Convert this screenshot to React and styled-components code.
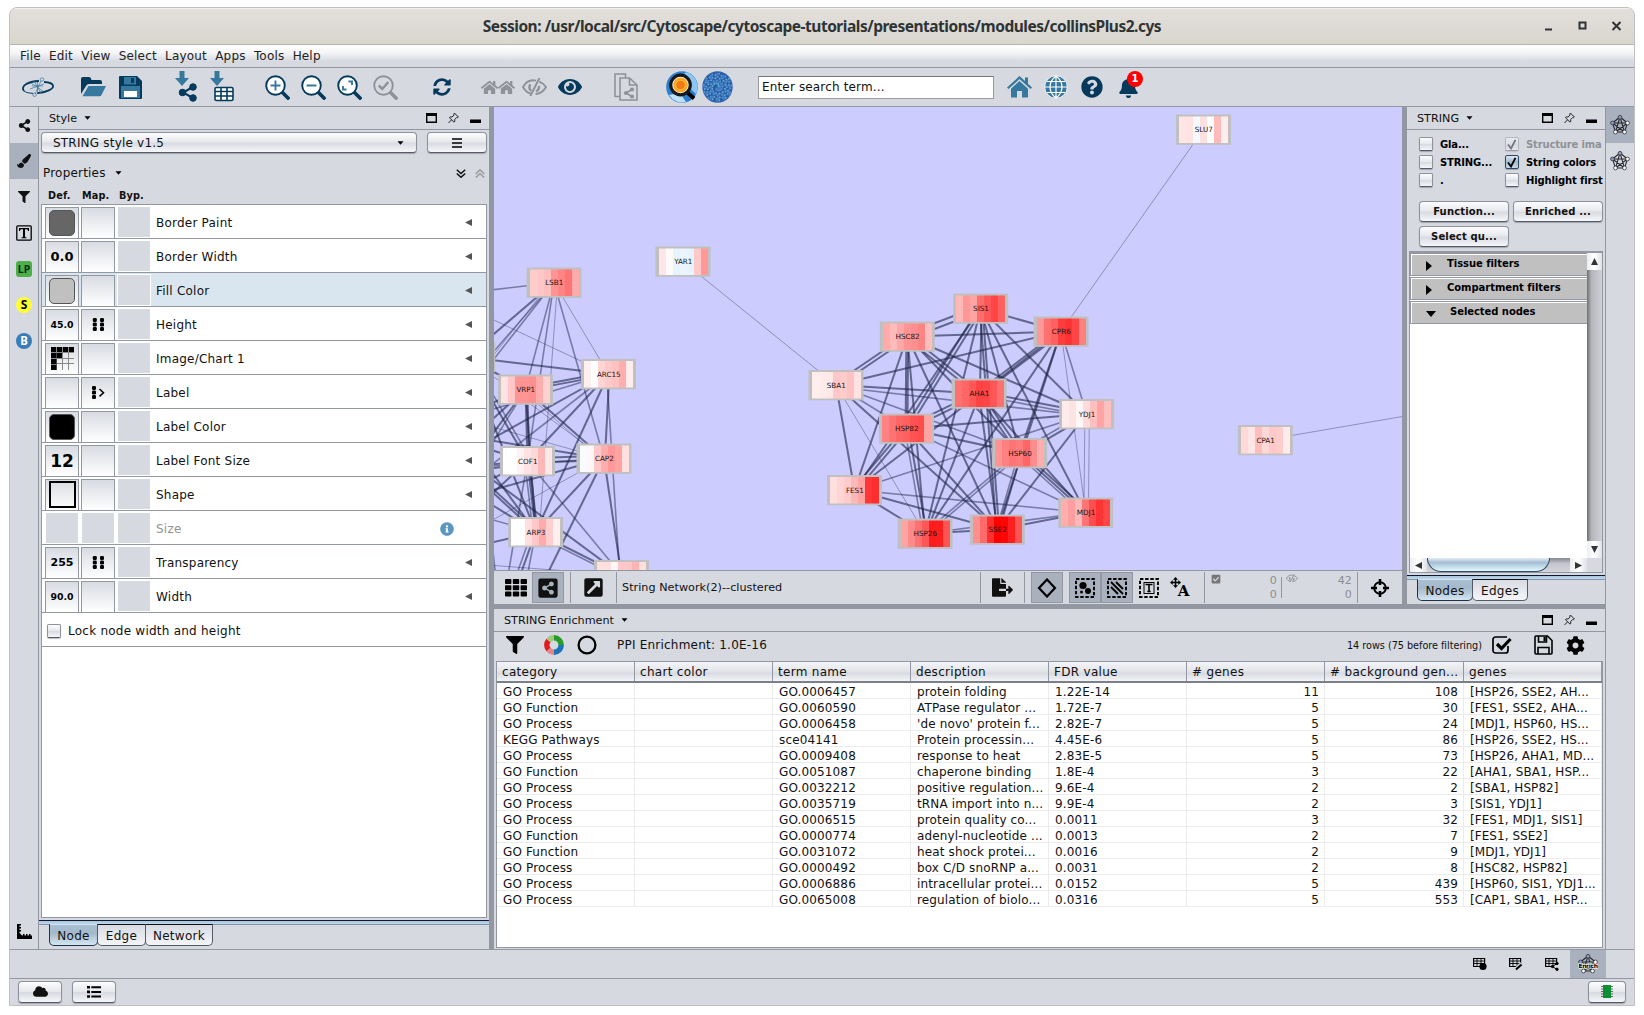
import React from "react";
import styled, { createGlobalStyle, css } from "styled-components";
import {
  FaShareAlt, FaPaintBrush, FaFilter, FaEye,
  FaQuestionCircle, FaBell, FaCloud, FaCog, FaInfoCircle,
  FaShareAltSquare, FaCheckSquare, FaFileExport, FaExternalLinkSquareAlt,
  FaSyncAlt, FaHome,
} from "react-icons/fa";

const LINE = "#9297a1";
const BG = "#d6d9e0";
const SEL = "#a9b0be";
const NAVY = "#053a5c";
const BLUE = "#37789f";

const Global = createGlobalStyle`
  *{box-sizing:border-box}
  body{margin:0;background:#fff;overflow:hidden}
  body,input{font-family:"DejaVu Sans",sans-serif;font-size:12px;letter-spacing:.15px;color:#111}
  svg{display:block;flex:none}
`;

const Page = styled.div`width:1644px;height:1015px;padding:7px 9px 9px;`;
const Window = styled.div`
  width:1626px;height:999px;border:1px solid #c0c0c2;border-radius:8px 8px 0 0;
  overflow:hidden;display:flex;flex-direction:column;background:${BG};
`;
const TitleBar = styled.div`
  height:37px;flex:none;display:flex;align-items:center;border-bottom:1px solid #b7b4aa;
  background:linear-gradient(#e3e0dc,#d9d6cf);padding-right:10px;box-shadow:inset 0 1px #f3f1ee;
`;
const Title = styled.div`
  flex:1;text-align:center;font:700 15.5px "Noto Sans","Open Sans",sans-serif;letter-spacing:-.48px;
  color:#2e3436;padding-left:93px;
`;
const WinButtons = styled.div`display:flex;gap:19px;`;
const MenuBar = styled.div`
  height:23px;flex:none;border-bottom:1px solid ${LINE};display:flex;gap:8.3px;align-items:center;
  padding:0 10px;background:linear-gradient(#fff,#f4f5f7 35%,${BG} 75%);color:#222;letter-spacing:.17px;
`;
const ToolBar = styled.div`
  height:39px;flex:none;border-bottom:1px solid ${LINE};display:flex;align-items:center;padding-left:12px;
`;
const Tool = styled.div`
  width:${p => p.$w}px;height:34px;margin-right:${p => p.$gap || 0}px;flex:none;position:relative;
  display:flex;align-items:center;justify-content:center;color:${p => p.$c || NAVY};
`;
const SearchBox = styled.input`
  width:236px;height:23px;border:1px solid #9b9b9b;border-top-color:#777;background:#fff;padding:0 3px;
  margin-right:13px;outline:0;&::placeholder{color:#111;opacity:1}
`;
const Badge = styled.span`
  position:absolute;left:10px;top:1px;width:16px;height:16px;border-radius:8px;background:#f00;color:#fff;
  font:700 10px/16px "DejaVu Sans",sans-serif;text-align:center;
`;
const Main = styled.div`height:842px;flex:none;display:flex;`;
const Strip = styled.div`
  width:${p => p.$w}px;flex:none;display:flex;flex-direction:column;
  ${p => p.$side === "left" ? css`border-right:1px solid ${LINE};` : css`border-left:1px solid ${LINE};`}
`;
const StripTab = styled.div`
  height:36px;display:flex;align-items:center;justify-content:center;background:${p => p.$on ? SEL : "transparent"};
`;
const Grow = styled.div`flex:1;`;
const TagChip = styled.div`
  width:16px;height:16px;border-radius:${p => p.$round ? "8px" : "3px"};background:${p => p.$bg};color:${p => p.$c};
  font:700 ${p => p.$fs || 10.5}px/16px "Noto Sans",sans-serif;text-align:center;letter-spacing:0;
`;
const StylePanel = styled.div`width:450px;flex:none;display:flex;flex-direction:column;`;
const PanelHead = styled.div`
  height:23px;flex:none;border-bottom:1px solid ${LINE};display:flex;align-items:center;
  padding:0 8px 0 10px;font-size:11.2px;letter-spacing:0;
`;
const HeadIcons = styled.div`margin-left:auto;display:flex;gap:11px;align-items:center;`;
const metal = css`
  border:1px solid #8d929c;border-bottom-color:#555a63;border-radius:4px;
  background:linear-gradient(#fdfdfe,#e6e8ec 48%,#d7dae1 52%,#f6f7fa);
  box-shadow:0 1px 1px rgba(60,65,80,.35);
`;
const Button = styled.div`
  ${metal} width:${p => p.$w}px;height:${p => p.$h || 21}px;flex:none;display:flex;align-items:center;justify-content:center;
  ${p => p.$bold && css`font:700 10px "DejaVu Sans",sans-serif;`}
`;
const Combo = styled.div`${metal} width:376px;height:21px;display:flex;align-items:center;justify-content:space-between;padding:0 12px 0 11px;letter-spacing:.2px;`;
const ComboRow = styled.div`display:flex;justify-content:space-between;padding:2px 2px 0;height:24px;`;
const PropsHead = styled.div`height:36px;flex:none;display:flex;align-items:center;padding:2px 4px 0 4px;gap:9px;letter-spacing:.2px;`;
const ColHead = styled.div`
  height:14px;flex:none;display:grid;grid-template-columns:34px 37px 40px;padding-left:9px;
  font:700 9.7px/12px "DejaVu Sans",sans-serif;
`;
const PropList = styled.div`flex:none;margin:0 2px 2px;height:714px;border:1px solid ${LINE};background:#fff;`;
const PropRow = styled.div`
  height:34px;border-bottom:1px solid ${LINE};display:flex;align-items:flex-end;padding:0 14px 0 3px;
  background:${p => p.$on ? "#dae6ef" : "#fff"};color:${p => p.$dim ? "#949494" : "#111"};
`;
const Cell = styled.div`
  display:flex;align-items:center;justify-content:center;margin-right:2px;width:34px;height:31px;
  ${p => p.$empty ? css`width:32px;height:30px;margin:0 3px 1px 1px;background:${BG};outline:${p.$ring ? "1px solid #fff" : "0"};` : css`
    border:1px solid ${LINE};border-bottom:0;margin-bottom:0;padding:0 0 1px;
    background:linear-gradient(#d8dbe2,#fff);`}
  font:700 ${p => p.$fs || 12}px "DejaVu Sans",sans-serif;color:#000;letter-spacing:0;
`;
const Swatch = styled.div`width:26px;height:26px;border-radius:5px;background:${p => p.$c};border:1px solid #555;`;
const Square = styled.div`width:27px;height:27px;border:2px solid #000;margin-left:1px;`;
const PropName = styled.div`flex:1;height:33px;line-height:37px;padding-left:3px;letter-spacing:.22px;`;
const RowEnd = styled.div`height:31px;display:flex;align-items:center;margin-right:${p => p.$m || 0}px;`;
const LockRow = styled.div`height:34px;border-bottom:1px solid ${LINE};display:flex;align-items:center;padding:2px 0 0 5px;gap:7px;letter-spacing:.24px;`;
const Check = styled.div`
  ${metal} width:14px;height:14px;border-radius:2px;flex:none;display:flex;align-items:center;justify-content:center;
  ${p => p.$on && css`background:linear-gradient(#dfe9f2,#9fb9cd 50%,#c5dbea);border-color:#2d4861;`}
  ${p => p.$dim && css`opacity:.45;`}
`;
const TabEdge = styled.div`height:5px;flex:none;border-top:1px solid #101830;border-bottom:1px solid #7f97ab;background:linear-gradient(#a9c3da,#c0d9ec);`;
const Tabs = styled.div`display:flex;padding-left:10px;margin-top:-1px;`;
const Tab = styled.div`
  width:${p => p.$w}px;height:22px;line-height:22px;text-align:center;border:1px solid ${p => p.$on ? "#1c3347" : "#555b66"};border-top-color:${p => p.$on ? "transparent" : "#101018"};
  border-radius:0 0 5px 5px;margin-right:-1px;letter-spacing:.3px;
  background:${p => p.$on ? "linear-gradient(#a9c0d3,#a3b8ca 40%,#d3e6f2)" : "linear-gradient(#d8dbe2,#f4f5f8)"};
`;
const Divider = styled.div`
  flex:none;background:${LINE};${p => p.$h ? css`height:5px;` : css`width:5px;`}
`;
const Work = styled.div`width:1111px;flex:none;display:flex;flex-direction:column;`;
const Upper = styled.div`height:497px;flex:none;display:flex;`;
const Network = styled.div`width:908px;flex:none;display:flex;flex-direction:column;`;
const NetBar = styled.div`
  height:34px;flex:none;border-top:1px solid ${LINE};display:flex;align-items:center;
`;
const NetButton = styled.div`
  width:${p => p.$w || 32}px;height:31px;flex:none;display:flex;align-items:center;justify-content:center;
  margin-right:${p => p.$gap || 0}px;padding-left:${p => p.$pl || 0}px;
  ${p => p.$on && css`background:${SEL};border:1px solid ${LINE};`}
`;
const Sep = styled.div`width:1px;height:${p => p.$h || 31}px;background:${LINE};flex:none;`;
const NetName = styled.div`font-size:11.2px;padding-left:5px;flex:1;letter-spacing:.03px;`;
const Counts = styled.div`
  width:${p => p.$w}px;display:grid;grid-template-columns:14px 1fr;color:#8b8e94;font:11px/14px "DejaVu Sans",sans-serif;text-align:right;
`;
const StringPanel = styled.div`width:198px;flex:none;display:flex;flex-direction:column;overflow:hidden;`;
const Options = styled.div`
  display:grid;grid-template-columns:86px 1fr;grid-auto-rows:18px;padding:5px 0 0 12px;height:67px;flex:none;align-items:center;
`;
const Option = styled.div`
  display:flex;gap:7px;align-items:center;white-space:nowrap;font:700 10px "DejaVu Sans",sans-serif;letter-spacing:-.15px;
  color:${p => p.$dim ? "#8f9297" : "#000"};
`;
const ButtonGrid = styled.div`
  display:grid;grid-template-columns:90px 90px;grid-auto-rows:21px;align-content:start;gap:4px;padding:4px 0 0 12px;flex:none;height:54px;
`;
const ScrollPane = styled.div`
  height:322px;flex:none;margin:0 2px 2px;border:2px solid ${LINE};border-width:2px 1px 1px 1px;
  display:grid;grid-template-columns:1fr 15px;grid-template-rows:1fr 14px;
`;
const Filters = styled.div`background:#fff;overflow:hidden;`;
const FilterRow = styled.div`
  height:23px;margin-bottom:1px;border:1px solid ${LINE};border-right:0;box-shadow:inset 1px 1px #fff;background:#c0c0c0;
  display:flex;align-items:center;padding-left:15px;font:700 10px "DejaVu Sans",sans-serif;letter-spacing:-.05px;color:#000;gap:${p => p.$gap}px;
`;
const FilterName = styled.span`padding-bottom:2px;`;
const FilterMark = styled.svg`margin-top:2px;`;
const VScroll = styled.div`background:linear-gradient(90deg,#6e7074,#b4b6bb 30%,#cfd1d6);display:flex;flex-direction:column;justify-content:space-between;`;
const HScroll = styled.div`background:linear-gradient(#85888f,#c4c6cb 40%,#d3d5da);display:flex;`;
const Arrow = styled.div`
  background:linear-gradient(90deg,#eceef2,#fff 50%,#dfe2e8);display:flex;align-items:center;justify-content:center;
  ${p => p.$v ? css`height:17px;` : css`width:17px;`}
`;
const Thumb = styled.div`
  width:123px;height:14px;border:1px solid #2c4a63;border-top:0;border-radius:0 0 14px 14px;
  background:linear-gradient(#e4eef6,#a5bed3 35%,#bcd5e6 60%,#e6f8ff);
`;
const Enrich = styled.div`flex:1;display:flex;flex-direction:column;`;
const EnrichBar = styled.div`height:29px;flex:none;display:flex;align-items:center;padding:0 20px 3px 12px;`;
const Ppi = styled.span`letter-spacing:.22px;padding-left:1px;`;
const RowsInfo = styled.div`font-size:9.7px;letter-spacing:-.03px;margin:0 10px 0 auto;`;
const Table = styled.div`height:287px;flex:none;margin:0 2px;border:1px solid ${LINE};background:#fff;`;
const grid = css`display:grid;grid-template-columns:repeat(6,138px) 139px 1fr;`;
const THead = styled.div`
  ${grid} height:21px;border-bottom:2px solid #7b7f89;background:linear-gradient(#f4f5f8,#e4e6ea 45%,#d8dbe1 60%,#f3f4f7);
`;
const Th = styled.div`height:19px;line-height:21px;padding:0 5px;border-right:1px solid ${LINE};white-space:nowrap;letter-spacing:.3px;`;
const TRow = styled.div`${grid} height:16px;border-bottom:1px solid #ececec;`;
const Td = styled.div`
  line-height:18px;height:16px;padding:0 5px 0 6px;border-right:1px solid #ececec;white-space:nowrap;text-align:${p => p.$r ? "right" : "left"};letter-spacing:.14px;
  &:last-child{letter-spacing:.05px;padding-right:0;}
`;
const StatusBar = styled.div`
  height:30px;flex:none;border-top:1px solid ${LINE};border-bottom:1px solid ${LINE};display:flex;justify-content:flex-end;padding-right:28px;
`;
const StatusTab = styled.div`width:36px;display:flex;align-items:center;justify-content:center;background:${p => p.$on ? SEL : "transparent"};`;
const Footer = styled.div`flex:1;display:flex;align-items:center;padding:0 8px 1px 8px;gap:10px;`;

const CaretMark = styled.svg`margin-left:7px;`;
const Caret = () => <CaretMark width="7" height="4"><path d="M0.5 .3h6l-3 3.4z" fill="#000" /></CaretMark>;
const PanelIcons = () => (
  <HeadIcons>
    <svg width="11" height="10"><path d="M.7 0h9.6v9.3H.7z" fill="none" stroke="#000" strokeWidth="1.4" /><path d="M0 0h11v3H0z" /></svg>
    <svg width="11" height="12" viewBox="0 0 11 12" fill="none" stroke="#222" strokeWidth="1"><path d="M6.4 1l4 4-1 .7-.7-.2-2 2 .1 2L6 10.2 1.400 5.600l.7-.7 2 .1 2-2-.3-.8zM3.500 7.900L.5 11" /></svg>
    <svg width="11" height="10"><path d="M0 6.500h11V10H0z" /></svg>
  </HeadIcons>
);
const Tri = ({ d = "l", s = 7, c = "#555" }) => (
  <svg width={s} height={s} viewBox="0 0 8 8"><path fill={c} d={{ l: "M8 0v8L0 4z", r: "M0 0v8l8-4z", u: "M0 8h8L4 0z", d: "M0 0h8L4 8z" }[d]} /></svg>
);
const Tick = () => <svg width="10" height="11" viewBox="0 0 10 11"><path d="M1 5.500l3 4L8.500.8" fill="none" stroke="#000" strokeWidth="1.800" /></svg>;
const Dots = ({ arrow }) => (
  <svg width="13" height="14" viewBox="0 0 13 14">
    {[0, 4.5, 9].map(y => <g key={y}><rect x={arrow ? 0 : .8} y={y} width="4" height="4" rx="1.200" />{!arrow && <rect x="8" y={y} width="4" height="4" rx="1.200" />}</g>)}
    {arrow && <path d="M7.500 3l4 3.700-4 3.700" fill="none" stroke="#000" strokeWidth="1.500" />}
  </svg>
);
const ChartGrid = () => (
  <svg width="23" height="23" viewBox="0 0 23 23">
    <path d="M5.500 0v23M11.500 0v23M17.500 0v23M0 5.500h23M0 11.500h23M0 16.500h23" stroke="#888" />
    <path d="M0 0h5v5H0zM6 0h5v5H6zM12 0h5v5h-5zM18 0h5v5h-5zM0 6h5.500v5H0zM6 6h5v5H6zM0 12h5.500v5H0zM0 17.500h5.500V23H0z" />
  </svg>
);
const Chevrons = ({ up, c }) => (
  <svg width="10" height="9" viewBox="0 0 10 9" fill="none" stroke={c} strokeWidth="1.500"><path d={up ? "M.8 4.800L5 .8l4.200 4M.8 8.500l4.200-4 4.200 4" : "M.8.8L5 4.600 9.200.8M.8 4.500L5 8.300l4.200-3.800"} /></svg>
);
const StarNet = ({ enrich }) => (
  <svg width="20" height="20" viewBox="0 0 20 20">
    <path d="M10 2L2.500 8l3 9h9l3-9zM10 2L5.500 17 17.500 8h-15l12 9z" fill="none" stroke="#24262b" strokeWidth="1.050" />
    {[[10, 2.300, "#8e9bd4"], [2.500, 8, "#8e9bd4"], [17.500, 8, "#fff"], [5.500, 17, "#fff"], [14.500, 17, "#fff"]].map(([x, y, f], i) => <circle key={i} cx={x} cy={y} r="1.900" fill={f} stroke="#333" strokeWidth=".8" />)}
    {enrich && <text x="10" y="13.800" textAnchor="middle" fontSize="6" fontWeight="700" letterSpacing="-.35" stroke="#fff" strokeWidth="1.200" paintOrder="stroke">Enrich</text>}
  </svg>
);
const Logo = () => (
  <svg width="32" height="20" viewBox="0 0 32 20" fill="none" stroke={NAVY}>
    <path d="M2 14C-2 9 6 4.500 17 4M15 16.200C24 15.500 32 12 31 8.500 30.500 6.500 27 5.300 22 5" strokeWidth="1.800" />
    <path d="M2 14c2 1.500 5 2.200 9 2.300" strokeWidth="1" />
    <g stroke={BLUE} strokeWidth=".7"><path d="M9 6l12 8M8 12l14-5M12 4l7 12M15.500 5v11M19 4l-6 13M10 9h11" /><circle cx="20" cy="2.500" r="1.700" /><circle cx="12.500" cy="17.800" r="1.700" /></g>
  </svg>
);
const Mag = ({ kind, c = NAVY, c2 = BLUE }) => (
  <svg width="25" height="25" viewBox="0 0 25 25">
    <path d="M16.500 16.500l6.500 6.500" stroke={c} strokeWidth="3.600" strokeLinecap="square" />
    <circle cx="10.500" cy="10.500" r="9.300" fill={kind === "ok" ? BG : "#fff"} stroke={c} strokeWidth="1.900" />
    <path fill="none" stroke={c2} strokeWidth={kind === "ok" ? 2.500 : 1.900} d={{ plus: "M5.500 10.500h10M10.500 5.500v10", minus: "M5.500 10.500h10", fit: "M11.500 6.500h3.500v3.500M9.500 14.500H6v-3.500", ok: "M5.800 10.500l3.500 3.500 6-7" }[kind]} />
  </svg>
);
const HiddenEye = ({ w = 25 }) => (
  <svg width={w} height={w * .72} viewBox="0 0 25 18" fill="none" stroke="currentColor">
    <path d="M14 2.600C8 1.200 3.500 4.500 1 9c1.800 3.300 4.500 5.600 7.500 6.500M17.300 3.600C20.300 4.800 22.400 6.800 24 9c-2.600 4.500-6.500 6.900-10.500 7" strokeWidth="1.900" />
    <path d="M8.300 6.300c-1.500 2.500-.8 5 1 6.500M17 8c.3 2.500-1 4.500-3 5.500" strokeWidth="2.400" /><path d="M17.500 0L8.300 18" strokeWidth="2" />
  </svg>
);
const Import = ({ table }) => (
  <svg width="24" height="32" viewBox="0 0 24 32">
    <path d="M4.500 0h5v7H14l-7 8-7-8h4.500z" fill={BLUE} />
    {table ? <g><rect x="5" y="16.500" width="18" height="13" rx="1.500" fill="#fff" stroke={NAVY} strokeWidth="1.600" /><path d="M5 20.500h18M5 25h18M11 17v12.500M17 17v12.500" stroke={NAVY} strokeWidth="1.600" /></g>
      : <g fill={NAVY} stroke={NAVY}><path d="M18 16L8 21.500 18 27" fill="none" strokeWidth="2" /><circle cx="18" cy="16" r="3.300" /><circle cx="7.500" cy="21.500" r="3.300" /><circle cx="18" cy="27" r="3.300" /></g>}
  </svg>
);
const DocShare = () => (
  <svg width="24" height="28" viewBox="0 0 24 28" fill="none" stroke="#8f9296" strokeWidth="1.600">
    <path d="M5.500 23.500H1V1h10.500v4M6 5h9.500l7.500 7v15H6zM15.500 5v7H23" />
    <path d="M18 16.500l-6 3.500 6 3.500" /><g fill="#8f9296" stroke="none"><circle cx="18" cy="16.500" r="2.100" /><circle cx="12" cy="20" r="2.100" /><circle cx="18" cy="23.500" r="2.100" /></g>
  </svg>
);
const Orange = () => (
  <svg width="32" height="32" viewBox="0 0 32 32">
    <circle cx="16" cy="16" r="15.800" fill="#2b7fcf" /><path d="M20 1a15.500 15.500 0 0 1 10 22L14 8z" fill="#8cc6f4" /><path d="M3 24a15.500 15.500 0 0 0 17 7l-6-9z" fill="#bfe2fa" />
    <path d="M22 22l6 5.500" stroke="#000" strokeWidth="4" /><circle cx="14.500" cy="14" r="9.800" fill="#fff" stroke="#17181a" strokeWidth="3.200" />
    <circle cx="14.500" cy="14" r="7.400" fill="#fba61c" /><circle cx="14.500" cy="14" r="4.800" fill="#f47a10" stroke="#ffc861" strokeWidth=".8" />
  </svg>
);
const SPECKS = Array.from({ length: 150 }, (_, i) => {
  const r = 14.3 * Math.sqrt((i + 1) / 150), a = ((i * 7919) % 360) * 1.7;
  return [15.5 + r * Math.cos(a), 16 + r * Math.sin(a), i];
});
const BlueBall = () => (
  <svg width="31" height="32" viewBox="0 0 31 32"><ellipse cx="15.500" cy="16" rx="15.200" ry="15.800" fill="#3264ae" />
    {SPECKS.map(([x, y, i]) => <circle key={i} cx={x} cy={y} r="1" fill={["#4f9bd0", "#4482c6", "#5fa8d4", "#2c559f"][i % 4]} />)}
  </svg>
);
const Globe = () => (
  <svg width="24" height="24" viewBox="0 0 24 24"><circle cx="12" cy="12" r="11.300" fill={BLUE} stroke="#fff" strokeWidth=".9" />
    <path d="M12 1v22M1 12h22M3 6.500h18M3 17.500h18M12 1c-8 6-8 16 0 22M12 1c8 6 8 16 0 22" fill="none" stroke="#fff" strokeWidth="1.200" /></svg>
);
const House = () => (
  <svg width="25" height="22" viewBox="0 0 25 22" fill={BLUE}><path d="M12.500 0L0 11.500l1.500 1.600L12.500 3l11 10.100 1.500-1.600-4-3.700V1.500h-3v3.600zM12.500 5L4 12.700V21.500h6V15h5v6.500h6v-8.800z" /></svg>
);
const BoxT = ({ s = 16 }) => (
  <svg width={s} height={s} viewBox="0 0 16 16"><rect x=".8" y=".8" width="14.400" height="14.400" rx="1" fill="none" stroke="#000" strokeWidth="1.300" /><path d="M3 3h10v3h-1L11.300 4.300H9V12l1.500.4v.8h-5v-.8L7 12V4.300H4.700L4 6H3z" /></svg>
);
const Marquee = ({ children }) => (
  <svg width="20" height="20" viewBox="0 0 20 20"><rect x="1" y="1" width="18" height="18" fill="none" stroke="#000" strokeWidth="1.900" strokeDasharray="3.400 1.750" />{children}</svg>
);
const TableIcon = ({ k }) => (
  <svg width="14" height="14" viewBox="0 0 14 14" fill="none" stroke="#000"><path d="M.6 1.500h11v8H.6zM0 1.500h12" strokeWidth="1.200" /><path d="M.6 4h11M.6 6.500h11M4 1.500v8M8 1.500v8" strokeWidth=".9" />
    {k === 0 && <circle cx="10" cy="9.500" r="3.600" fill="#000" stroke="none" />}
    {k === 1 && <path d="M6.500 12.800l6.500-6" stroke={BG} strokeWidth="4" />}{k === 1 && <path d="M7 12.500l5.500-5" strokeWidth="2" />}
    {k === 2 && <path d="M6.500 8h7v6h-7z" fill={BG} stroke="none" />}
    {k === 2 && <g fill="#000"><path d="M12 6.500L7.500 9.500l4.500 3" fill="none" /><circle cx="12" cy="6.500" r="1.200" /><circle cx="7.500" cy="9.500" r="1.200" /><circle cx="12" cy="12.300" r="1.200" /></g>}
  </svg>
);
const Ruler = () => <svg width="15" height="15" viewBox="0 0 15 15"><path d="M0 0h4v1.500H2.500V3H4v1.500H2.500V6H4v1.500H2.500V9L5 11.500h1V10h1.500v1.500H9V10h1.500v1.500H12V10h1.500v1.500H15V15H0z" /></svg>;
const Donut = () => (
  <svg width="20" height="20" viewBox="-10 -10 20 20" fill="none" strokeWidth="5.500">
    <path d="M0-7.200A7.200 7.200 0 0 1 7.200 0" stroke="#2a9a2a" /><path d="M7.200 0A7.200 7.200 0 0 1 0 7.200" stroke="#1c74b8" />
    <path d="M0 7.200A7.200 7.200 0 0 1-5.500 4.600" stroke="#e3868a" /><path d="M-5.500 4.600A7.200 7.200 0 0 1-5.500-4.600" stroke="#e01b20" /><path d="M-5.500-4.600A7.200 7.200 0 0 1 0-7.200" stroke="#9ccb7c" />
  </svg>
);
const Floppy = () => (
  <svg width="19" height="20" viewBox="0 0 19 20" fill="none" stroke="#000" strokeWidth="1.600">
    <path d="M1 2q0-1 1-1h11.500L18 5.500V18q0 1-1 1H2q-1 0-1-1z" /><path d="M4.500 1v6h8V1M4 19v-6.500h11V19" /><path d="M9.500 2h2.200v4H9.500z" fill="#000" stroke="none" />
  </svg>
);
const GridNine = () => (
  <svg width="22" height="18" viewBox="0 0 22 18">{[0, 1, 2].map(r => [0, 1, 2].map(c => <rect key={`${r}${c}`} x={c * 7.800} y={r * 6.300} width="6.400" height="5" rx=".8" />))}</svg>
);
const BulletList = () => (
  <svg width="14" height="12" viewBox="0 0 14 12"><path d="M0 0h3v2.600H0zM0 4.600h3v2.600H0zM0 9.200h3v2.600H0zM4.300.3H14v2H4.300zM4.300 4.900H14v2H4.300zM4.300 9.500H14v2H4.300z" /></svg>
);
const MoveLabel = () => (
  <svg width="22" height="24" viewBox="0 0 22 24">
    <path d="M5.500 1L8 3.700H6.300v2h2V4L11 6.500 8.300 9V7.300h-2v2H8L5.500 12 3 9.300h1.700v-2h-2V9L0 6.500 2.700 4v1.700h2v-2H3z" />
    <text x="13.500" y="19.500" textAnchor="middle" fontFamily="'DejaVu Serif',serif" fontWeight="700" fontSize="15" letterSpacing="0">A</text>
  </svg>
);

/* Network view: node centre plus seven expression values, 0 = white, 100 = red, negative = bluish */
const NODES = {
  SLU7: [1203.5, 129.5, [10, 11, -4, 12, 0, 27, 7]],
  YAR1: [683, 261.5, [10, 2, -8, -7, -8, 21, 40]],
  LSB1: [554, 282.5, [20, 22, 25, 42, 48, 54, 33]],
  ARC15: [608.5, 374, [6, 0, 17, 21, 24, 32, 7]],
  VRP1: [525.5, 389.5, [11, 22, 42, 42, 44, 32, 18]],
  COF1: [527.5, 461, [0, 0, 5, 11, 15, 28, 9]],
  CAP2: [604, 458.5, [-2, 3, 22, 32, 40, 36, 12]],
  ARP3: [535.7, 532, [0, 0, 13, 22, 33, 19, 6]],
  ARP2: [621.5, 575, [12, 13, 3, 22, 22, 30, 13]],
  SIS1: [980.7, 308.5, [28, 40, 36, 57, 66, 73, 62]],
  CPR6: [1061, 331.5, [40, 56, 62, 76, 80, 73, 50]],
  HSC82: [907.3, 336.5, [33, 27, 35, 42, 44, 48, 26]],
  SBA1: [836, 385, [7, 8, 9, 22, 20, 24, 11]],
  AHA1: [979, 393.5, [56, 60, 66, 74, 73, 66, 56]],
  YDJ1: [1086.7, 414, [8, 11, 3, 14, 25, 36, 25]],
  HSP82: [906.5, 428.5, [49, 55, 60, 62, 68, 70, 36]],
  HSP60: [1019.7, 453, [42, 50, 54, 52, 60, 45, 32]],
  FES1: [854.5, 490, [13, 17, 20, 28, 36, 79, 82]],
  HSP26: [925, 533.5, [36, 46, 56, 66, 89, 88, 67]],
  SSE2: [997.3, 529.5, [44, 58, 82, 100, 98, 88, 67]],
  MDJ1: [1085.7, 512.5, [32, 38, 28, 54, 70, 80, 72]],
  CPA1: [1265.3, 440, [15, 10, 26, 15, 21, 20, 8]],
};
const OFF = {
  L: [467, 357], P1: [440, 296], P2: [430, 290], P3: [425, 430], P4: [436, 470], P5: [440, 505], P6: [450, 415],
  P7: [497, 640], P8: [515, 640], P9: [420, 560], Q: [1560, 389.5],
};
const EDGES = `SLU7 CPR6 t;YAR1 SBA1 t;CPA1 Q t;
SIS1 HSC82 k -3;SIS1 HSC82 k 3;SIS1 CPR6 k;HSC82 CPR6 k;SBA1 CPR6 k;HSC82 SBA1 k -2;HSC82 SBA1 k 2;SIS1 HSP82 k -2;SIS1 HSP82 k 2;SIS1 FES1 k;
SIS1 AHA1 k -1;SIS1 SSE2 k 1;SIS1 SSE2 k -2;SIS1 HSP60 k;SIS1 MDJ1 k;SIS1 YDJ1 k;SIS1 HSP26 k;HSC82 AHA1 k -2;HSC82 AHA1 k 2;HSC82 YDJ1 k;HSC82 HSP60 k;
HSC82 HSP82 k -1;HSC82 HSP82 k 1;HSC82 FES1 k;HSC82 HSP26 k;HSC82 SSE2 k;CPR6 AHA1 k -2;CPR6 AHA1 k 2;CPR6 FES1 k;CPR6 HSP60 k;CPR6 HSP26 k;
CPR6 YDJ1 m;CPR6 MDJ1 t;CPR6 SSE2 k;SBA1 AHA1 k;SBA1 YDJ1 m 2;SBA1 HSP82 m;SBA1 HSP60 m;SBA1 HSP26 t;SBA1 SSE2 k;SBA1 FES1 k;AHA1 YDJ1 k -2;AHA1 YDJ1 m 2;
AHA1 HSP82 k -2;AHA1 HSP82 k 2;AHA1 HSP60 k -2;AHA1 HSP60 k 2;AHA1 MDJ1 k;AHA1 SSE2 k;AHA1 HSP26 k -1;YDJ1 HSP82 k;YDJ1 HSP60 k -2;YDJ1 HSP60 m 2;
YDJ1 FES1 m;YDJ1 SSE2 k;YDJ1 MDJ1 t -3;YDJ1 MDJ1 t 2;HSP82 HSP60 k;HSP82 MDJ1 m;HSP82 SSE2 k;HSP82 HSP26 k -2;HSP82 HSP26 m 2;
HSP82 FES1 k -2;HSP82 FES1 k 2;HSP60 SSE2 k -2;HSP60 SSE2 m 1;HSP60 HSP26 m -2;HSP60 HSP26 m 1;HSP60 MDJ1 k -3;HSP60 MDJ1 k 0;HSP60 MDJ1 m 3;FES1 HSP26 k;FES1 SSE2 k;
FES1 MDJ1 m;HSP26 SSE2 k;HSP26 MDJ1 m;SSE2 MDJ1 k;
LSB1 P1 m;LSB1 L k;LSB1 P6 m;LSB1 P3 m;LSB1 P6 t 3;LSB1 VRP1 m;LSB1 COF1 m;LSB1 ARP3 t -4;LSB1 CAP2 m;LSB1 ARC15 t;P2 ARC15 t;L ARC15 k;L VRP1 k;L CAP2 t;L COF1 k;
VRP1 ARC15 k -2;VRP1 ARC15 k 1;P4 ARC15 k;P3 ARC15 m;ARC15 COF1 k;ARC15 P5 m;ARC15 ARP3 k;ARC15 CAP2 k -1;ARC15 ARP2 m 2;CAP2 ARP2 k;VRP1 CAP2 k;VRP1 CAP2 t 3;
VRP1 COF1 k -2;VRP1 COF1 k;VRP1 ARP3 k;VRP1 P4 k;VRP1 P5 k;VRP1 P3 k;VRP1 P9 m;COF1 CAP2 k -3;COF1 CAP2 k 2;P3 CAP2 k;P5 CAP2 k;P4 CAP2 m;P6 CAP2 t;
COF1 ARP3 k -2;COF1 ARP3 k 0;COF1 ARP3 m 3;COF1 ARP2 m;COF1 P3 k;COF1 P4 k;COF1 P5 k;COF1 P9 k;COF1 L m 4;CAP2 ARP3 k;CAP2 P9 t;CAP2 P8 k;
ARP3 ARP2 k;ARP3 ARP2 m 3;P3 ARP2 k;ARP3 P3 k;ARP3 P3 k 3;ARP3 P4 k;ARP3 P6 k;ARP3 P5 m;ARP3 P9 k;ARP3 L k;ARP3 P7 k;ARP3 P7 m 4;ARP3 P8 m;P9 ARP2 t;COF1 P7 m;P4 P6 m;P3 P5 k;P6 P7 m;P4 COF1 k 4;P5 P6 k;L P7 m -6`
  .split(";").map(s => s.trim().split(" "));
const STROKE = { k: [2, .6], m: [1.6, .48], t: [1, .36] };
const tint = v => v < 0 ? `rgb(${255 + v * 3},${255 + v * 1.4},253)` : `rgb(255,${Math.round(255 - v * 2.55)},${Math.round(255 - v * 2.55)})`;
const at = n => NODES[n] || OFF[n];

const NetworkView = () => (
  <svg width="908" height="463" viewBox="494 107 908 463">
    <rect x="494" y="107" width="908" height="463" fill="#ccccff" />
    {EDGES.map(([a, b, k, o], i) => {
      const [x1, y1] = at(a), [x2, y2] = at(b), l = Math.hypot(x2 - x1, y2 - y1), d = (+o || 0) * .9;
      const nx = -(y2 - y1) / l * d, ny = (x2 - x1) / l * d;
      return <line key={i} x1={x1 + nx} y1={y1 + ny} x2={x2 + nx} y2={y2 + ny} stroke="#1c2544" strokeWidth={STROKE[k][0]} strokeOpacity={STROKE[k][1]} />;
    })}
    <rect x="494" y="342" width="1.200" height="30" fill="#c0c0c0" />
    {Object.entries(NODES).map(([n, [x, y, v]]) => (
      <g key={n}>
        <rect x={x - 27.500} y={y - 15} width="55" height="30.300" fill="#c0c0c0" />
        {v.map((q, i) => <rect key={i} x={Math.round(x - 24.500) + i * 7} y={y - 13} width="7" height="26.500" fill={tint(q)} />)}
        {n !== "ARP2" && <text x={x + .3} y={y + 2.900} textAnchor="middle" fontSize="7.200" letterSpacing="0" fill="#151515">{n}</text>}
      </g>
    ))}
  </svg>
);

const PROPS = [
  ["Border Paint", <Swatch $c="#666" />, null],
  ["Border Width", "0.0", null, 13],
  ["Fill Color", <Swatch $c="#c0c0c0" />, null],
  ["Height", "45.0", <Dots />, 9.4],
  ["Image/Chart 1", <ChartGrid />, null],
  ["Label", null, <Dots arrow />],
  ["Label Color", <Swatch $c="#000" />, null],
  ["Label Font Size", "12", null, 17],
  ["Shape", <Square />, null],
  ["Size"],
  ["Transparency", "255", <Dots />, 11],
  ["Width", "90.0", null, 9.4],
];
const ROWS = `GO Process|GO.0006457|protein folding|1.22E-14|11|108|[HSP26, SSE2, AH...
GO Function|GO.0060590|ATPase regulator ...|1.72E-7|5|30|[FES1, SSE2, AHA...
GO Process|GO.0006458|'de novo' protein f...|2.82E-7|5|24|[MDJ1, HSP60, HS...
KEGG Pathways|sce04141|Protein processin...|4.45E-6|5|86|[HSP26, SSE2, HS...
GO Process|GO.0009408|response to heat|2.83E-5|5|73|[HSP26, AHA1, MD...
GO Function|GO.0051087|chaperone binding|1.8E-4|3|22|[AHA1, SBA1, HSP...
GO Process|GO.0032212|positive regulation...|9.6E-4|2|2|[SBA1, HSP82]
GO Process|GO.0035719|tRNA import into n...|9.9E-4|2|3|[SIS1, YDJ1]
GO Process|GO.0006515|protein quality co...|0.0011|3|32|[FES1, MDJ1, SIS1]
GO Function|GO.0000774|adenyl-nucleotide ...|0.0013|2|7|[FES1, SSE2]
GO Function|GO.0031072|heat shock protei...|0.0016|2|9|[MDJ1, YDJ1]
GO Process|GO.0000492|box C/D snoRNP a...|0.0031|2|8|[HSC82, HSP82]
GO Process|GO.0006886|intracellular protei...|0.0152|5|439|[HSP60, SIS1, YDJ1...
GO Process|GO.0065008|regulation of biolo...|0.0316|5|553|[CAP1, SBA1, HSP...`.split("\n").map(r => r.split("|"));

function StyleSide() {
  return (
    <StylePanel>
      <PanelHead>Style<Caret /><PanelIcons /></PanelHead>
      <ComboRow>
        <Combo>STRING style v1.5<Caret /></Combo>
        <Button $w={60}><svg width="10" height="10"><path d="M0 1h10M0 5h10M0 9h10" stroke="#000" strokeWidth="1.600" /></svg></Button>
      </ComboRow>
      <PropsHead>Properties<svg width="7" height="4"><path d="M.5.3h6l-3 3.400z" /></svg><Grow /><Chevrons c="#111" /><Chevrons up c="#999" /></PropsHead>
      <ColHead><span>Def.</span><span>Map.</span><span>Byp.</span></ColHead>
      <PropList>
        {PROPS.map(([name, def, map, fs]) => {
          const dim = name === "Size";
          return (
            <PropRow key={name} $on={name === "Fill Color"} $dim={dim}>
              <Cell $empty={dim} $fs={fs}>{def}</Cell>
              <Cell $empty={dim}>{map}</Cell>
              <Cell $empty $ring={name === "Fill Color"} />
              <PropName>{name}</PropName>
              <RowEnd $m={dim ? 18 : 0}>{dim ? <FaInfoCircle size={14} color="#5b97bd" /> : <Tri />}</RowEnd>
            </PropRow>
          );
        })}
        <LockRow><Check />Lock node width and height</LockRow>
      </PropList>
      <TabEdge />
      <Tabs><Tab $w={49} $on>Node</Tab><Tab $w={49}>Edge</Tab><Tab $w={68}>Network</Tab></Tabs>
    </StylePanel>
  );
}

function StringSide() {
  return (
    <StringPanel>
      <PanelHead>STRING<Caret /><PanelIcons /></PanelHead>
      <Options>
        <Option><Check />Gla...</Option><Option $dim><Check $dim><Tick /></Check>Structure ima</Option>
        <Option><Check />STRING...</Option><Option><Check $on><Tick /></Check>String colors</Option>
        <Option><Check />.</Option><Option><Check />Highlight first</Option>
      </Options>
      <ButtonGrid>
        <Button $w={90} $bold>Function...</Button><Button $w={90} $bold>Enriched ...</Button><Button $w={90} $bold>Select qu...</Button>
      </ButtonGrid>
      <ScrollPane>
        <Filters>
          <FilterRow $gap={15}><FilterMark width="6" height="10"><path d="M0 0l6 5-6 5z" /></FilterMark><FilterName>Tissue filters</FilterName></FilterRow>
          <FilterRow $gap={15}><FilterMark width="6" height="10"><path d="M0 0l6 5-6 5z" /></FilterMark><FilterName>Compartment filters</FilterName></FilterRow>
          <FilterRow $gap={14}><FilterMark width="10" height="6"><path d="M0 0h10L5 6z" /></FilterMark><FilterName>Selected nodes</FilterName></FilterRow>
        </Filters>
        <VScroll><Arrow $v><Tri d="u" c="#333" /></Arrow><Arrow $v><Tri d="d" c="#333" /></Arrow></VScroll>
        <HScroll><Arrow><Tri d="l" c="#333" /></Arrow><Thumb /><Grow /><Arrow><Tri d="r" c="#333" /></Arrow></HScroll>
      </ScrollPane>
      <TabEdge />
      <Tabs><Tab $w={56} $on>Nodes</Tab><Tab $w={56}>Edges</Tab></Tabs>
    </StringPanel>
  );
}

function NetToolbar() {
  return (
    <NetBar>
      <NetButton $w={38} $pl={5}><GridNine /></NetButton>
      <NetButton $on $gap={6}><FaShareAltSquare size={22} /></NetButton><Sep />
      <NetButton $w={45}><FaExternalLinkSquareAlt size={21} /></NetButton><Sep />
      <NetName>String Network(2)--clustered</NetName><Sep />
      <NetButton $w={43}><FaFileExport size={21} /></NetButton><Sep />
      <NetButton $w={6} />
      <NetButton $on $gap={6}><svg width="20" height="20"><path d="M10 1.500L18 10l-8 8.500L2 10z" fill="none" stroke="#000" strokeWidth="2.200" /></svg></NetButton>
      <NetButton $on><Marquee><circle cx="8" cy="7.500" r="3.600" /><circle cx="13" cy="13" r="3" /><circle cx="6.500" cy="14" r="1.500" /></Marquee></NetButton>
      <NetButton $on><Marquee><path d="M4 4l12 12M9 4l7 7M4 9l7 7" stroke="#000" strokeWidth="1.800" /></Marquee></NetButton>
      <NetButton><Marquee><rect x="5" y="4.500" width="10" height="11" fill="none" stroke="#000" /><path d="M6.500 6.500h7M10 6.500v7M8.300 13.500h3.400" stroke="#000" strokeWidth="1.600" /></Marquee></NetButton>
      <NetButton><MoveLabel /></NetButton>
      <NetButton $w={7} /><Sep />
      <NetButton $w={6} />
      <Counts $w={66}><FaCheckSquare size={10} color="#777" /><span>0</span><span /><span>0</span></Counts>
      <NetButton $w={4} /><Sep $h={21} /><NetButton $w={4} />
      <Counts $w={66}><HiddenEye w={12} /><span>42</span><span /><span>0</span></Counts>
      <NetButton $w={5} /><Sep />
      <NetButton $w={44}><svg width="18" height="18" fill="none" stroke="#000"><circle cx="9" cy="9" r="5.800" strokeWidth="2" /><path d="M9 0v6M9 12v6M0 9h6M12 9h6" strokeWidth="2.600" /></svg></NetButton>
    </NetBar>
  );
}

function Enrichment() {
  return (
    <Enrich>
      <PanelHead>STRING Enrichment<Caret /><PanelIcons /></PanelHead>
      <EnrichBar>
        <Tool $w={17} $gap={21} $c="#000"><FaFilter size={18} /></Tool>
        <Tool $w={20} $gap={14}><Donut /></Tool>
        <Tool $w={18} $gap={20}><svg width="20" height="20"><circle cx="10" cy="10" r="8.400" fill="none" stroke="#000" strokeWidth="2.300" /></svg></Tool>
        <Ppi>PPI Enrichment: 1.0E-16</Ppi>
        <RowsInfo>14 rows (75 before filtering)</RowsInfo>
        <Tool $w={20} $gap={22}><svg width="20" height="18" fill="none" stroke="#000"><path d="M16 10v4.500a2.500 2.500 0 0 1-2.500 2.500h-10A2.500 2.500 0 0 1 1 14.500v-11A2.500 2.500 0 0 1 3.500 1H15" strokeWidth="1.700" /><path d="M5 8l4.500 4.500L18.500 3" strokeWidth="3.200" /></svg></Tool>
        <Tool $w={19} $gap={12} $c="#000"><Floppy /></Tool>
        <Tool $w={20} $c="#000"><FaCog size={19} /></Tool>
      </EnrichBar>
      <Table>
        <THead>{["category", "chart color", "term name", "description", "FDR value", "# genes", "# background gen...", "genes"].map(h => <Th key={h}>{h}</Th>)}</THead>
        {ROWS.map(([a, ...r], i) => (
          <TRow key={i}><Td>{a}</Td><Td />{r.map((v, j) => <Td key={j} $r={j === 3 || j === 4}>{v}</Td>)}</TRow>
        ))}
      </Table>
    </Enrich>
  );
}

export default function App() {
  return (
    <Page>
      <Global />
      <Window>
        <TitleBar>
          <Title>Session: /usr/local/src/Cytoscape/cytoscape-tutorials/presentations/modules/collinsPlus2.cys</Title>
          <WinButtons>
            <svg width="15" height="14"><path d="M4 10.500h7" stroke="#2e3436" strokeWidth="2" /></svg>
            <svg width="15" height="14"><path d="M4.500 3.500h6v6h-6z" fill="none" stroke="#2e3436" strokeWidth="2" /></svg>
            <svg width="15" height="14"><path d="M3.500 3l8 8M11.500 3l-8 8" stroke="#2e3436" strokeWidth="2" /></svg>
          </WinButtons>
        </TitleBar>
        <MenuBar>{["File", "Edit", "View", "Select", "Layout", "Apps", "Tools", "Help"].map(m => <span key={m}>{m}</span>)}</MenuBar>
        <ToolBar>
          <Tool $w={32} $gap={27}><Logo /></Tool>
          <Tool $w={25} $gap={13}><svg width="25" height="20" viewBox="0 0 25 20"><path d="M0 17V2q0-2 2-2h6q1.500 0 2 1.500L10.500 3H19q2 0 2 2v2H8Q6 7 5 9z" fill={NAVY} /><path d="M7.500 9H25l-4.500 9q-.7 1.200-2 1.200H1.500z" fill={BLUE} /></svg></Tool>
          <Tool $w={23} $gap={33}><svg width="23" height="23" viewBox="0 0 23 23"><path d="M1 0h17l5 5v17q0 1-1 1H1q-1 0-1-1V1q0-1 1-1z" fill={NAVY} /><path d="M5 1h12v7.500H5z" fill={BLUE} /><path d="M12 2h3v5h-3z" fill={NAVY} /><path d="M2 10h19v12H2z" fill={BLUE} /><path d="M5 15h13v6H5z" fill="#fff" /></svg></Tool>
          <Tool $w={24} $gap={11}><Import /></Tool>
          <Tool $w={24} $gap={31}><Import table /></Tool>
          <Tool $w={25} $gap={11}><Mag kind="plus" /></Tool>
          <Tool $w={25} $gap={11}><Mag kind="minus" /></Tool>
          <Tool $w={25} $gap={11}><Mag kind="fit" /></Tool>
          <Tool $w={25} $gap={34}><Mag kind="ok" c="#8f9296" c2="#8f9296" /></Tool>
          <Tool $w={19} $gap={31}><FaSyncAlt size={18} /></Tool>
          <Tool $w={32} $gap={8} $c="#8f9296"><FaHome size={17} /><FaHome size={17} /></Tool>
          <Tool $w={25} $gap={10} $c="#8f9296"><HiddenEye /></Tool>
          <Tool $w={25} $gap={31}><FaEye size={24} /></Tool>
          <Tool $w={25} $gap={28}><DocShare /></Tool>
          <Tool $w={32} $gap={4}><Orange /></Tool>
          <Tool $w={31} $gap={25}><BlueBall /></Tool>
          <SearchBox placeholder="Enter search term..." />
          <Tool $w={25} $gap={12}><House /></Tool>
          <Tool $w={24} $gap={13}><Globe /></Tool>
          <Tool $w={22} $gap={14}><FaQuestionCircle size={22} /></Tool>
          <Tool $w={22}><FaBell size={21} /><Badge>1</Badge></Tool>
        </ToolBar>
        <Main>
          <Strip $w={29} $side="left">
            <StripTab><FaShareAlt size={13} /></StripTab>
            <StripTab $on><FaPaintBrush size={14} /></StripTab>
            <StripTab><FaFilter size={12} /></StripTab>
            <StripTab><BoxT /></StripTab>
            <StripTab><TagChip $bg="#4daf4a" $c="#022c05">LP</TagChip></StripTab>
            <StripTab><TagChip $round $bg="#ffff33" $c="#000" $fs={12}>S</TagChip></StripTab>
            <StripTab><TagChip $round $bg="#377eb8" $c="#fff" $fs={11.500}>B</TagChip></StripTab>
            <Grow />
            <StripTab><Ruler /></StripTab>
          </Strip>
          <StyleSide />
          <Divider />
          <Work>
            <Upper>
              <Network><NetworkView /><NetToolbar /></Network>
              <Divider />
              <StringSide />
            </Upper>
            <Divider $h />
            <Enrichment />
          </Work>
          <Strip $w={29} $side="right">
            <StripTab $on><StarNet /></StripTab>
            <StripTab><StarNet /></StripTab>
          </Strip>
        </Main>
        <StatusBar>
          <StatusTab><TableIcon k={0} /></StatusTab><StatusTab><TableIcon k={1} /></StatusTab><StatusTab><TableIcon k={2} /></StatusTab>
          <StatusTab $on><StarNet enrich /></StatusTab>
        </StatusBar>
        <Footer>
          <Button $w={44} $h={22}><FaCloud size={15} /></Button>
          <Button $w={44} $h={22}><BulletList /></Button>
          <Grow />
          <Button $w={38} $h={22}><svg width="12" height="13"><path d="M0 1.500h12M0 4h12M0 6.500h12M0 9h12M0 11.500h12" stroke="#444" strokeWidth=".8" /><path d="M2 0h8v13H2z" fill="#0a8f35" /></svg></Button>
        </Footer>
      </Window>
    </Page>
  );
}
